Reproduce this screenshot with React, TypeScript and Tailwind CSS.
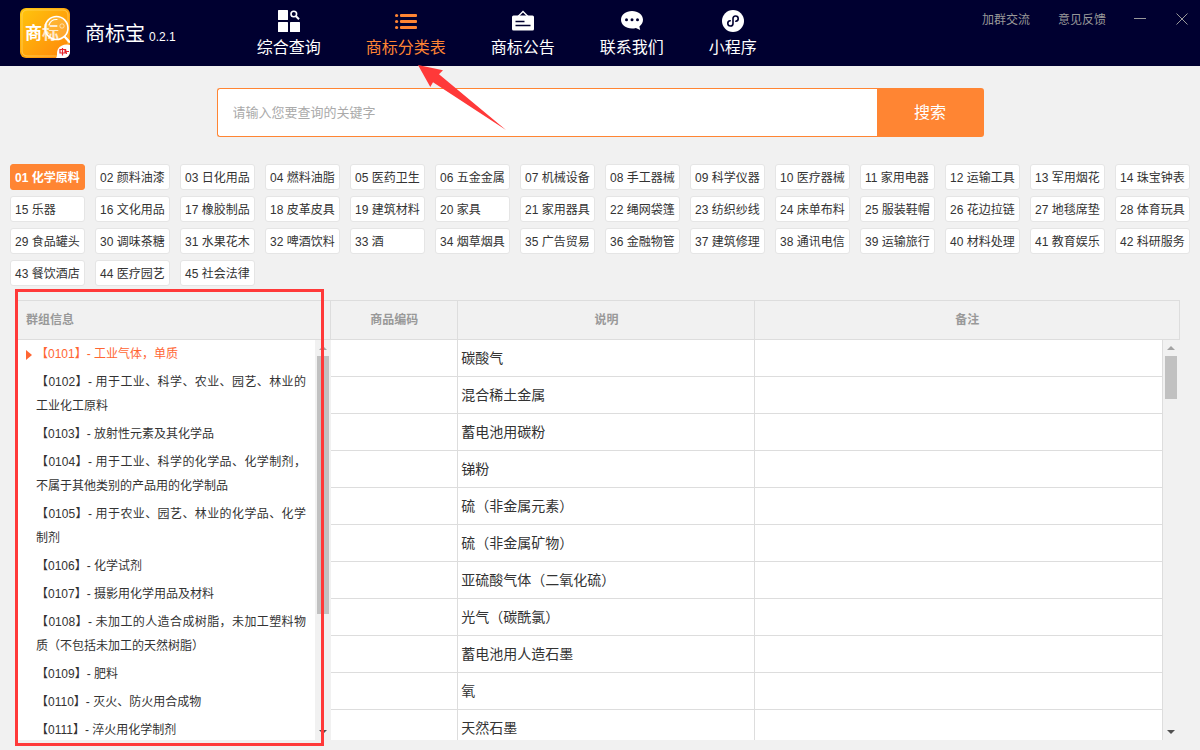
import React from 'react';

const categories = [
  '01 化学原料', '02 颜料油漆', '03 日化用品', '04 燃料油脂', '05 医药卫生', '06 五金金属', '07 机械设备',
  '08 手工器械', '09 科学仪器', '10 医疗器械', '11 家用电器', '12 运输工具', '13 军用烟花', '14 珠宝钟表',
  '15 乐器', '16 文化用品', '17 橡胶制品', '18 皮革皮具', '19 建筑材料', '20 家具', '21 家用器具',
  '22 绳网袋篷', '23 纺织纱线', '24 床单布料', '25 服装鞋帽', '26 花边拉链', '27 地毯席垫', '28 体育玩具',
  '29 食品罐头', '30 调味茶糖', '31 水果花木', '32 啤酒饮料', '33 酒', '34 烟草烟具', '35 广告贸易',
  '36 金融物管', '37 建筑修理', '38 通讯电信', '39 运输旅行', '40 材料处理', '41 教育娱乐', '42 科研服务',
  '43 餐饮酒店', '44 医疗园艺', '45 社会法律',
];

const groups = [
  '【0101】- 工业气体，单质',
  '【0102】- 用于工业、科学、农业、园艺、林业的工业化工原料',
  '【0103】- 放射性元素及其化学品',
  '【0104】- 用于工业、科学的化学品、化学制剂，不属于其他类别的产品用的化学制品',
  '【0105】- 用于农业、园艺、林业的化学品、化学制剂',
  '【0106】- 化学试剂',
  '【0107】- 摄影用化学用品及材料',
  '【0108】- 未加工的人造合成树脂，未加工塑料物质（不包括未加工的天然树脂）',
  '【0109】- 肥料',
  '【0110】- 灭火、防火用合成物',
  '【0111】- 淬火用化学制剂',
];

const goods = [
  '碳酸气', '混合稀土金属', '蓄电池用碳粉', '锑粉', '硫（非金属元素）', '硫（非金属矿物）',
  '亚硫酸气体（二氧化硫）', '光气（碳酰氯）', '蓄电池用人造石墨', '氧', '天然石墨',
];

const Logo: React.FC = () => (
  <svg width="50" height="50" viewBox="0 0 50 50" aria-hidden="true">
    <defs>
      <linearGradient id="logo-bg" x1="0" y1="0" x2="1" y2="1">
        <stop offset="0" stopColor="#ffc60d" />
        <stop offset="1" stopColor="#ff850a" />
      </linearGradient>
    </defs>
    <rect width="50" height="50" rx="6" fill="url(#logo-bg)" />
    <rect x="2" y="2" width="46" height="46" rx="5" fill="none" stroke="#ffd766" strokeWidth="0.7" />
    <text x="5" y="31" fontSize="17" fontWeight="700" fill="#fff">商</text>
    <text x="22" y="31" fontSize="17" fontWeight="700" fill="#fff" fillOpacity="0.75">标</text>
    <circle cx="36.500" cy="20" r="11.500" fill="#fff" fillOpacity="0.15" stroke="#fff" strokeWidth="1.6" />
    <path d="M29 17a8 8 0 0 1 8-5.500" fill="none" stroke="#fff" strokeWidth="1.2" strokeLinecap="round" />
    <circle cx="42" cy="18" r="2.200" fill="none" stroke="#fff" strokeOpacity="0.7" strokeWidth="0.8" />
    <path d="M44.500 28.500l5.500 6" stroke="#fff" strokeWidth="2.4" />
    <path d="M36 50c2-3 0-5 2-9 2-4 8-5.500 12-4v7a6 6 0 0 1-6 6z" fill="#fff" />
    <path d="M40 41.500h5v3.500h-5zM42.500 40v7.500M45.500 41l1 5M45.500 43.500h3.500" fill="none" stroke="#e8242a" strokeWidth="1.2" />
  </svg>
);

const SearchGridIcon = () => (
  <svg width="22" height="22" viewBox="0 0 22 22" fill="currentColor" aria-hidden="true">
    <rect width="10" height="10" rx="0.5" />
    <rect y="12" width="10" height="10" rx="0.5" />
    <rect x="12" y="12" width="10" height="10" rx="0.5" />
    <circle cx="15.800" cy="4" r="2.800" fill="none" stroke="currentColor" strokeWidth="1.6" />
    <path d="M18 6.200l3 3" stroke="currentColor" strokeWidth="2" />
  </svg>
);

const ListIcon = () => (
  <svg width="22" height="22" viewBox="0 0 22 22" fill="currentColor" aria-hidden="true">
    <circle cx="1.600" cy="5.500" r="1.600" />
    <circle cx="1.600" cy="11.500" r="1.600" />
    <circle cx="1.600" cy="17.500" r="1.600" />
    <rect x="5" y="4" width="17" height="3" rx="1" />
    <rect x="5" y="10" width="17" height="3" rx="1" />
    <rect x="5" y="16" width="17" height="3" rx="1" />
  </svg>
);

const BoardIcon = () => (
  <svg width="22" height="22" viewBox="0 0 22 22" aria-hidden="true">
    <path d="M6 6.500l5-5 5 5" fill="none" stroke="currentColor" strokeWidth="1.4" />
    <rect y="5.500" width="22" height="15" rx="1.500" fill="currentColor" />
    <path d="M3.500 11.500h9M3.500 15.500h15" stroke="#000030" strokeWidth="1.4" />
  </svg>
);

const ChatIcon = () => (
  <svg width="22" height="22" viewBox="0 0 22 22" fill="currentColor" aria-hidden="true">
    <path d="M11 1c6.100 0 11 3.900 11 8.800 0 2.700-1.400 5-3.600 6.600l.8 3.600-4.300-2c-1.200.400-2.500.600-3.900.600C4.900 18.600 0 14.700 0 9.800S4.900 1 11 1z" />
    <g fill="#000030">
      <circle cx="5.500" cy="9.800" r="1.500" />
      <circle cx="11" cy="9.800" r="1.500" />
      <circle cx="16.500" cy="9.800" r="1.500" />
    </g>
  </svg>
);

const MiniProgramIcon = () => (
  <svg width="22" height="22" viewBox="0 0 22 22" aria-hidden="true">
    <circle cx="11" cy="11" r="11" fill="currentColor" />
    <path
      d="M8.200 10.800A2.600 2.600 0 1 0 11 13.400V8.600A2.600 2.600 0 1 1 13.800 11.200"
      fill="none"
      stroke="#000030"
      strokeWidth="1.6"
      strokeLinecap="round"
    />
  </svg>
);

const navItems = [
  { label: '综合查询', icon: <SearchGridIcon /> },
  { label: '商标分类表', icon: <ListIcon />, active: true },
  { label: '商标公告', icon: <BoardIcon /> },
  { label: '联系我们', icon: <ChatIcon /> },
  { label: '小程序', icon: <MiniProgramIcon /> },
];

const Header: React.FC = () => (
  <header className="flex h-[66px] shrink-0 items-start bg-[#000030] pl-5 pr-[10px] text-white">
    <div className="flex items-center gap-[15px] pt-2">
      <Logo />
      <h1 className="flex items-baseline gap-1 pt-[2px] text-xl">
        商标宝 <span className="text-xs font-medium">0.2.1</span>
      </h1>
    </div>
    <nav className="ml-[81px] flex gap-[45px] pt-[10px]">
      {navItems.map((item) => (
        <a
          key={item.label}
          href="#"
          className={`relative flex flex-col items-center gap-[6px] whitespace-nowrap text-base leading-5 ${item.active ? 'text-[#ff8533]' : 'text-white'}`}
        >
          {item.icon}
          {item.label}
          {item.active && (
            <svg className="absolute left-[52px] top-[55px] z-10" width="88" height="66" viewBox="0 0 88 66" aria-hidden="true">
              <path d="M0 0l25 5.300-4 4 67 55.700L15 17.300 12.300 22z" fill="#ff3939" />
            </svg>
          )}
        </a>
      ))}
    </nav>
    <div className="ml-auto flex items-center gap-7 pt-[10px] text-xs leading-5 text-[#999]">
      <a href="#">加群交流</a>
      <a href="#">意见反馈</a>
      <button type="button" aria-label="最小化">
        <svg width="12" height="12" viewBox="0 0 12 12" stroke="currentColor">
          <path d="M0 4.500h12" />
        </svg>
      </button>
      <button type="button" aria-label="关闭">
        <svg width="16" height="16" viewBox="0 0 16 16" stroke="currentColor" fill="none">
          <path d="M2.500 1.500l11 11M13.500 1.500l-11 11" />
        </svg>
      </button>
    </div>
  </header>
);

const SearchBar: React.FC = () => (
  <form className="mx-auto mt-[22px] flex h-[49px] w-full max-w-[767px] shrink-0" onSubmit={(e) => e.preventDefault()}>
    <input
      type="text"
      aria-label="关键字"
      placeholder="请输入您要查询的关键字"
      className="min-w-0 flex-1 rounded-l-[3px] border border-r-0 border-[#ff8533] bg-white px-[15px] text-[13px] outline-none placeholder:text-[#aaa]"
    />
    <button type="submit" className="w-[107px] rounded-r-[3px] bg-[#ff8533] text-base text-white">
      搜索
    </button>
  </form>
);

const Scrollbar: React.FC<{ thumb: string }> = ({ thumb }) => (
  <div className="flex h-full flex-col items-center bg-[#f1f1f1] py-[6px]">
    <svg width="8" height="4" viewBox="0 0 8 4" fill="#a3a3a3" aria-hidden="true">
      <path d="M4 0l4 4H0z" />
    </svg>
    <div className="mt-[6px] min-h-0 w-full flex-1 px-[2px]">
      <div className={`bg-[#c1c1c1] ${thumb}`} />
    </div>
    <svg width="8" height="4" viewBox="0 0 8 4" fill="#505050" aria-hidden="true">
      <path d="M4 4l4-4H0z" />
    </svg>
  </div>
);

const GroupPanel: React.FC = () => (
  <section className="relative flex w-[315px] shrink-0 flex-col">
    <h2 className="h-10 shrink-0 border-y border-r border-[#ddd] pl-[10px] text-xs font-bold leading-[38px] text-[#999]">
      群组信息
    </h2>
    <div className="flex min-h-0 flex-1 bg-white">
      <ul className="min-w-0 flex-1 overflow-hidden pl-5 pr-[9px] text-justify text-xs leading-6 text-[#333]">
        {groups.map((group, i) => (
          <li key={group} className={`relative py-[2px] ${i === 0 ? 'text-[#ff6633]' : ''}`}>
            {i === 0 && (
              <svg className="absolute -left-[10px] top-[10px]" width="6" height="10" viewBox="0 0 6 10" fill="currentColor" aria-hidden="true">
                <path d="M0 0l6 5-6 5z" />
              </svg>
            )}
            <a href="#">{group}</a>
          </li>
        ))}
      </ul>
      <div className="w-4">
        <Scrollbar thumb="h-[69%]" />
      </div>
    </div>
    <div className="pointer-events-none absolute -bottom-[6px] -left-px -top-[11px] right-[7px] border-3 border-[#ff3939]" />
  </section>
);

const GoodsTable: React.FC = () => (
  <section className="relative min-w-0 flex-1 overflow-hidden">
    <table className="w-full table-fixed border-separate border-spacing-0">
      <colgroup>
        <col className="w-[15%]" />
        <col className="w-[35%]" />
        <col />
      </colgroup>
      <thead>
        <tr className="text-xs text-[#999]">
          <th className="h-10 border-y border-r border-[#ddd]">商品编码</th>
          <th className="h-10 border-y border-r border-[#ddd]">说明</th>
          <th className="h-10 border-y border-r border-[#ddd]">备注</th>
        </tr>
      </thead>
      <tbody>
        {goods.map((name) => (
          <tr key={name} className="bg-white text-sm text-[#333]">
            <td className="h-[37px] border-b border-r border-[#ddd]" />
            <td className="h-[37px] border-b border-r border-[#ddd] px-[3px]">{name}</td>
            <td className="h-[37px] border-b border-[#ddd]" />
          </tr>
        ))}
      </tbody>
    </table>
    <div className="absolute bottom-0 right-0 top-10 w-[18px] border-l border-[#ddd] bg-[#f1f1f1] pr-px">
      <Scrollbar thumb="h-[43px]" />
    </div>
  </section>
);

export default function App() {
  return (
    <div className="flex h-screen flex-col overflow-hidden bg-[#f1f1f1] pb-[10px] font-['Liberation_Sans','Noto_Sans_CJK_SC',sans-serif]">
      <Header />
      <SearchBar />
      <div className="mt-[27px] grid shrink-0 grid-cols-14 gap-x-[10px] gap-y-[6px] px-[10px]">
        {categories.map((name, i) => (
          <button
            key={name}
            type="button"
            className={`h-[26px] whitespace-nowrap rounded-[3px] border pl-1 pt-[2px] text-left text-xs ${
              i === 0 ? 'border-[#ff8533] bg-[#ff8533] font-bold text-white' : 'border-[#e5e5e5] bg-white text-[#333]'
            }`}
          >
            {name}
          </button>
        ))}
      </div>
      <main className="mt-[14px] flex min-h-0 flex-1 pl-4 pr-5">
        <GroupPanel />
        <GoodsTable />
      </main>
    </div>
  );
}
